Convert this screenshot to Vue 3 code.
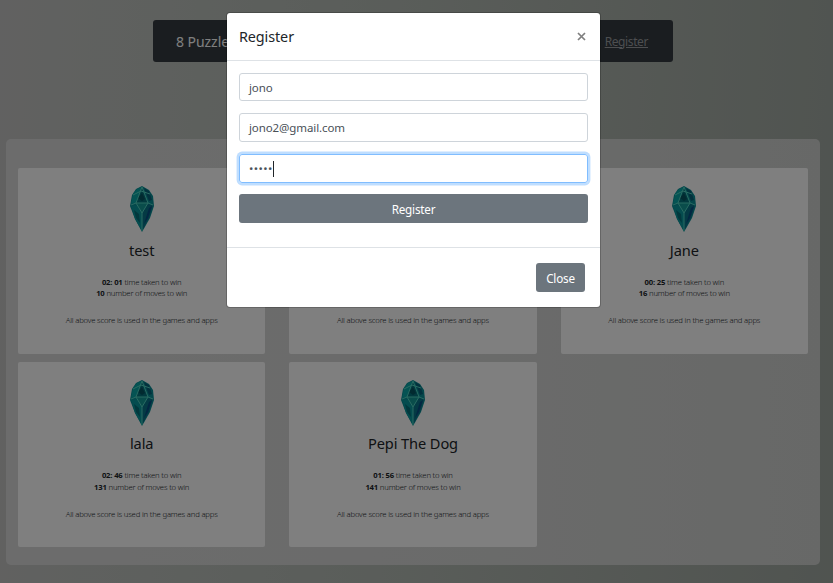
<script setup>
const scores = [
  { name: 'test', time: '02: 01', moves: 10 },
  { name: '', time: '', moves: '' },
  { name: 'Jane', time: '00: 25', moves: 16 },
  { name: 'lala', time: '02: 46', moves: 131 },
  { name: 'Pepi The Dog', time: '01: 56', moves: 141 },
]
</script>

<template>
  <div class="page">
    <nav class="navbar">
      <span class="brand">8 Puzzle</span>
      <a class="link">Register</a>
    </nav>
    <main class="panel">
      <article v-for="(s, i) in scores" :key="i" class="card">
        <svg class="gem" viewBox="0 0 24 46">
          <path d="M12 0L19 4L23 10L24 20L20 32L12 46L5 33L0 20L2 9L6 3Z" fill="#0a8e96" />
          <path d="M12 1L6 17L1 18L3 8L7 3Z" fill="#0aa6a6" />
          <path d="M12 1L18 17H6Z" fill="#04727c" />
          <path d="M18 17L23 19L19 32L12 45L12 28Z" fill="#087489" />
          <path d="M6 17H18L12 27Z" fill="#149a96" />
          <path d="M1 20L7 19L12 28V45L5 33Z" fill="#0a989e" />
          <path d="M14 2L19 5L22 14L19 15Z" fill="#07627a" />
          <path d="M19 22L22 20L18 32L14 38Z" fill="#064e84" />
          <path d="M8 12L12 7L15 13L12 15Z" fill="#045461" />
          <path d="M4 24L9 28L10 37L6 32Z" fill="#04707a" />
          <path d="M12 1L6 17L1 19M12 1L18 17L23 19M6 17H18L12 27L6 17M12 27V45M3 9L11 5L20 8" fill="none" stroke="#52d6c4" stroke-width="1" />
        </svg>
        <h2 class="name">{{ s.name }}</h2>
        <p class="stats">
          <span v-if="s.name"><b>{{ s.time }}</b> time taken to win</span>
          <span v-if="s.name"><b>{{ s.moves }}</b> number of moves to win</span>
        </p>
        <p class="note">All above score is used in the games and apps</p>
      </article>
    </main>

    <div class="backdrop">
      <section class="modal">
        <header class="head">
          <h1 class="title">Register</h1>
          <svg class="close" viewBox="0 0 9 9"><path d="M1 1L8 8M8 1L1 8" /></svg>
        </header>
        <div class="body">
          <div class="field"><span>jono</span></div>
          <div class="field mail"><span>jono2@gmail.com</span></div>
          <div class="field focused"><span class="dots">•••••</span><i class="caret"></i></div>
          <button class="btn">Register</button>
        </div>
        <footer class="foot"><button class="btn small">Close</button></footer>
      </section>
    </div>
  </div>
</template>

<style>
body { margin: 0; overflow: hidden; }
</style>

<style scoped>
* { box-sizing: border-box; }
.page {
  position: relative;
  width: 833px;
  height: 583px;
  padding: 20px 13px 0 6px;
  overflow: hidden;
  font-family: "Noto Sans", "Open Sans", sans-serif;
  color: #212529;
  background: linear-gradient(92deg, #c3c3c2 0%, #bcc1bc 20%, #b3bab3 50%, #aab1aa 75%, #a0a8a1 100%);
}
.navbar {
  display: flex;
  align-items: center;
  justify-content: space-between;
  width: 520px;
  height: 42px;
  margin: 0 auto 77px;
  padding: 0 25px 0 23px;
  border-radius: 3px;
  background: #343a40;
}
.brand { font-size: 14px; color: #fff; letter-spacing: -.05px; }
.link { font-size: 12px; color: #9a9da0; text-decoration: underline; letter-spacing: -.4px; }
.panel {
  display: grid;
  grid-template-columns: repeat(3, 1fr);
  grid-template-rows: 186px 185px;
  gap: 8px 24px;
  height: 426px;
  padding: 29px 12px 0;
  border-radius: 5px;
  background: linear-gradient(90deg, #d9d9d9, #d5d6d5 60%, #cfd1cf);
}
.card {
  display: flex;
  flex-direction: column;
  align-items: center;
  padding-top: 18px;
  border-radius: 2px;
  background: #fff;
}
.card:nth-child(n + 4) .name { margin-top: 7px; }
.card:nth-child(n + 4) .note { margin-top: 17px; }
.gem { width: 24px; height: 46px; flex: none; }
.name { height: 20px; margin: 8px 0 0; font-size: 14.6px; line-height: 20px; font-weight: 450; letter-spacing: -.1px; white-space: nowrap; }
.stats { display: flex; flex-direction: column; align-items: center; height: 23px; margin: 16px 0 0; padding-top: 1px; }
.card:nth-child(-n + 3) .stats { padding-top: .6px; }
.stats span, .note { font-size: 7.7px; line-height: 11.5px; font-weight: 300; letter-spacing: -.18px; white-space: nowrap; }
.stats b { font-weight: 700; }
.note { margin: 16px 0 0; }
.backdrop {
  position: absolute;
  inset: 0;
  display: flex;
  align-items: flex-start;
  padding: 13px 0 0 227px;
  background: rgba(0, 0, 0, .5);
}
.modal { width: 373px; height: 294px; border-radius: 3px; background: #fff; box-shadow: 0 0 0 1px rgba(0, 0, 0, .2); }
.head { display: flex; align-items: center; justify-content: space-between; height: 48px; padding: 0 14px 0 12px; border-bottom: 1px solid #dee2e6; }
.title { margin: 0; font-size: 14.4px; font-weight: 450; letter-spacing: -.1px; line-height: 20px; }
.close { width: 9px; height: 9px; fill: none; stroke: #7f7f7f; stroke-width: 1.7; }
.body { display: flex; flex-direction: column; gap: 12px; height: 186px; padding: 12px; }
.field {
  display: flex;
  align-items: center;
  height: 28px;
  padding: 1px 9px 0;
  border: 1px solid #ced4da;
  border-radius: 3px;
  font-size: 11.5px;
  letter-spacing: -.1px;
  color: #495057;
}
.mail { height: 29px; padding-top: 0; }
.focused { height: 29px; padding-top: 0; border-color: #80bdff; box-shadow: 0 0 0 2.4px rgba(0, 123, 255, .25); }
.dots { letter-spacing: .4px; }
.caret { width: 1px; height: 16px; background: #212529; }
.btn {
  flex: none;
  height: 29px;
  padding: 1px 0 0;
  border: 0;
  border-radius: 3px;
  font: 450 11.7px/28px "Noto Sans", sans-serif;
  letter-spacing: -.2px;
  color: #fff;
  background: #6c757d;
}
.body .btn { margin-top: -1px; }
.small { width: 49px; }
.foot { display: flex; justify-content: flex-end; height: 60px; padding: 15px 15px 0; border-top: 1px solid #dee2e6; }
</style>
